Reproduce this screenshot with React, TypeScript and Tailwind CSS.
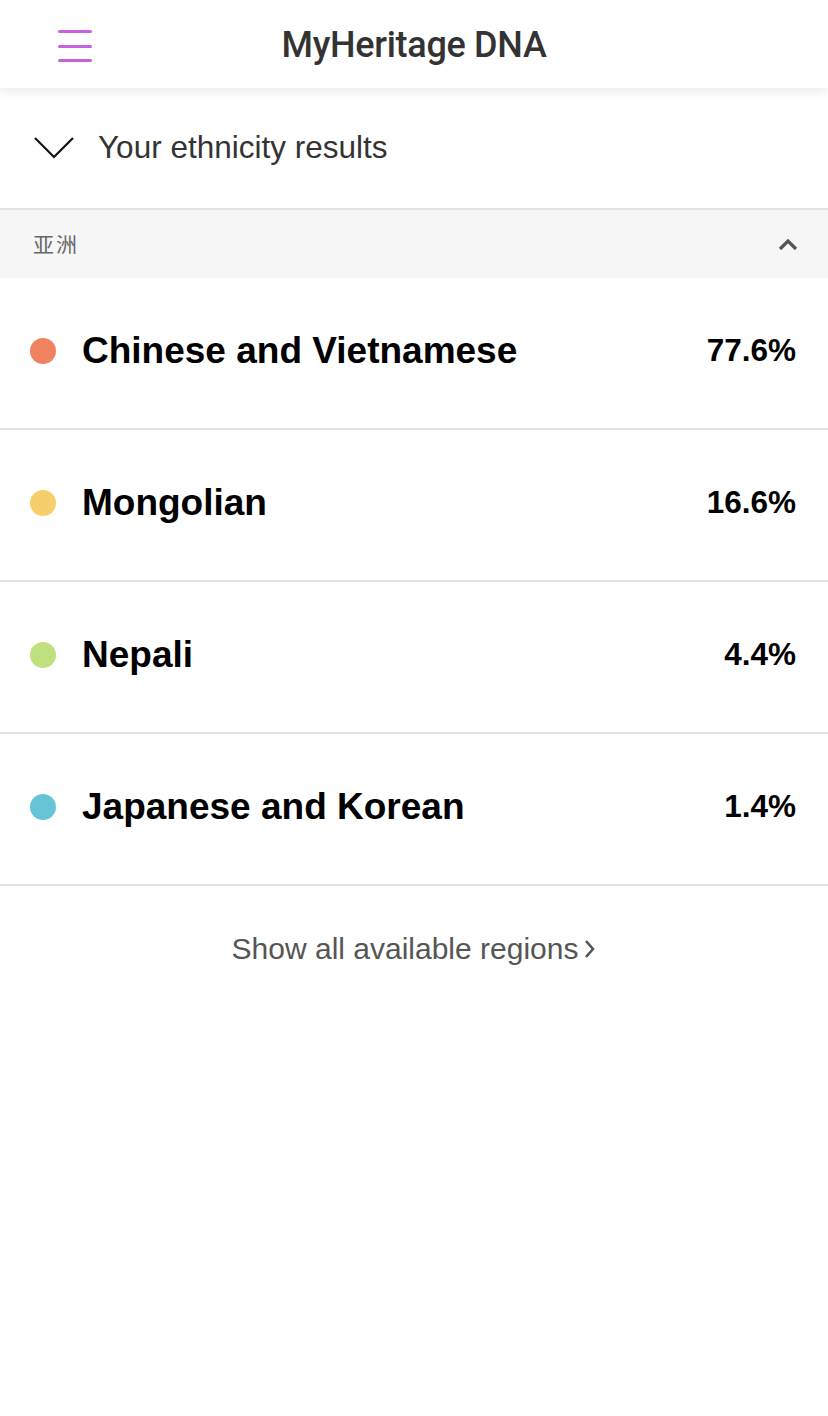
import React from "react";

const rows = [
  { name: "Chinese and Vietnamese", pct: "77.6%", color: "bg-[#f0825f]" },
  { name: "Mongolian", pct: "16.6%", color: "bg-[#f6cf6b]" },
  { name: "Nepali", pct: "4.4%", color: "bg-[#bfe07f]" },
  { name: "Japanese and Korean", pct: "1.4%", color: "bg-[#66c4d7]" },
];

export default function App() {
  return (
    <div className="w-[828px] min-h-[1416px] bg-white font-['Liberation_Sans',Arial,sans-serif]">
      <header className="relative h-[88px] flex items-center justify-center bg-white shadow-[0_4px_10px_rgba(0,0,0,0.08)] z-10">
        <div className="absolute left-[58px] top-[30px] flex flex-col gap-[11.5px]">
          <div className="w-[34px] h-[3px] rounded-full bg-[#c862dc]" />
          <div className="w-[34px] h-[3px] rounded-full bg-[#c862dc]" />
          <div className="w-[34px] h-[3px] rounded-full bg-[#c862dc]" />
        </div>
        <h1 className="text-[36px] font-medium text-[#333] font-['Roboto',sans-serif] tracking-[-0.3px] mt-[2px]">
          MyHeritage DNA
        </h1>
      </header>

      <div className="h-[122px] flex items-center border-b-2 border-[#e4e4e4]">
        <svg className="ml-[34px]" width="40" height="24" viewBox="0 0 40 24" fill="none">
          <path d="M1 2 L20 21 L39 2" stroke="#111" strokeWidth="2.2" />
        </svg>
        <span className="ml-[24px] text-[31.5px] text-[#333]">Your ethnicity results</span>
      </div>

      <div className="h-[68px] bg-[#f6f6f6] flex items-center justify-between pl-[33px] pr-[30px]">
        <span className="text-[21px] text-[#666] font-['Noto_Sans_CJK_SC',sans-serif] tracking-[2px]">亚洲</span>
        <svg width="20" height="14" viewBox="0 0 20 14" fill="none">
          <path d="M2 12 L10 4 L18 12" stroke="#555" strokeWidth="3.2" />
        </svg>
      </div>

      {rows.map((r) => (
        <div key={r.name} className="h-[152px] flex items-center border-b-2 border-[#e2e2e2] pl-[30px] pr-[32px] pb-[4px]">
          <div className={`w-[26px] h-[26px] rounded-full ${r.color}`} />
          <span className="ml-[26px] flex-1 text-[37px] font-bold text-black">{r.name}</span>
          <span className="text-[31.5px] font-bold text-black">{r.pct}</span>
        </div>
      ))}

      <div className="h-[124px] flex items-center justify-center">
        <span className="text-[30px] text-[#555]">Show all available regions</span>
        <svg className="ml-[6px] mt-[2px]" width="12" height="20" viewBox="0 0 12 20" fill="none">
          <path d="M2 2 L9 10 L2 18" stroke="#555" strokeWidth="2.6" />
        </svg>
      </div>
    </div>
  );
}
